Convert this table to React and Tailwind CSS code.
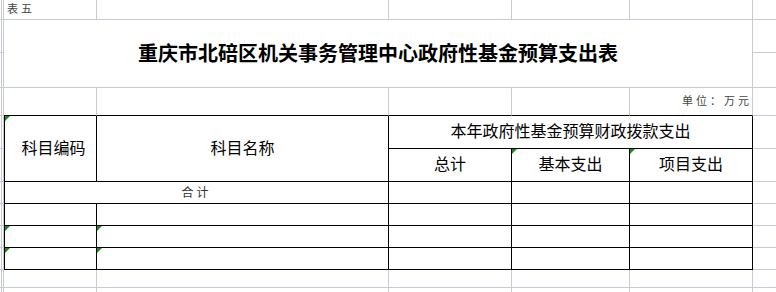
import React from 'react';

// sheet gridline / table border styles
const grid = 'relative box-border border-r border-b border-[#c7cbd8]';
const gridTop = 'relative box-border border-r border-b border-r-[#c7cbd8] border-b-black';
const cell = 'relative box-border border-r border-b border-black';
const cellLeft = 'relative box-border border-l border-r border-b border-black';

// green "number stored as text" marker
const Flag = () => (
  <svg className="absolute left-0 top-0" width="5" height="5" viewBox="0 0 5 5">
    <path d="M0 0H5L0 5Z" fill="#1b8a1b" />
  </svg>
);

const Edge = () => (
  <>
    <div className={grid} />
    <div className={grid} />
  </>
);

const DataRow = ({ flagged }) => (
  <>
    <Edge />
    <div className={cellLeft}>{flagged && <Flag />}</div>
    <div className={cell}>{flagged && <Flag />}</div>
    <div className={cell} />
    <div className={cell} />
    <div className={cell} />
    <div className={grid} />
  </>
);

const BlankRow = () => (
  <>
    <Edge />
    <div className={grid} />
    <div className={grid} />
    <div className={grid} />
    <div className={grid} />
    <div className={grid} />
    <div className={grid} />
  </>
);

export default function App() {
  return (
    <div className="w-[776px] h-[292px] overflow-hidden bg-white font-['Liberation_Sans','Noto_Sans_CJK_SC',sans-serif] text-black">
      <div className="grid grid-cols-[2px_2px_93px_292px_123px_118px_123px_120px] grid-rows-[20px_33px_35px_28px_33px_33px_22px_22px_22px_22px_18px_30px]">
        {/* row 1 */}
        <Edge />
        <div className={`${grid} flex items-center pl-[3px] text-[11px] tracking-[3px] text-[#444]`}>表五</div>
        <div className={grid} />
        <div className={grid} />
        <div className={grid} />
        <div className={grid} />
        <div className={grid} />

        {/* rows 2-3: title */}
        <Edge />
        <div className={`${grid} col-span-5 row-span-2 flex items-center justify-center text-[20px] font-bold`}>
          重庆市北碚区机关事务管理中心政府性基金预算支出表
        </div>
        <div className={grid} />
        <Edge />
        <div className={grid} />

        {/* row 4: unit */}
        <Edge />
        <div className={gridTop} />
        <div className={gridTop} />
        <div className={gridTop} />
        <div className={gridTop} />
        <div className={`${gridTop} flex items-center justify-end pr-0 text-[11px] tracking-[3px] text-[#444]`}>
          单位：万元
        </div>
        <div className={grid} />

        {/* rows 5-6: header */}
        <Edge />
        <div className={`${cellLeft} row-span-2 flex items-center justify-center pl-[6px] text-[16px]`}>
          <Flag />
          科目编码
        </div>
        <div className={`${cell} row-span-2 flex items-center justify-center text-[16px]`}>科目名称</div>
        <div className={`${cell} col-span-3 flex items-center justify-center text-[16px]`}>
          本年政府性基金预算财政拨款支出
        </div>
        <div className={grid} />
        <Edge />
        <div className={`${cell} flex items-center justify-center text-[16px]`}>总计</div>
        <div className={`${cell} flex items-center justify-center text-[16px]`}>
          <Flag />
          基本支出
        </div>
        <div className={`${cell} flex items-center justify-center text-[16px]`}>
          <Flag />
          项目支出
        </div>
        <div className={grid} />

        {/* row 7: total */}
        <Edge />
        <div className={`${cellLeft} col-span-2 flex items-center justify-center text-[12px] tracking-[3px] text-[#333]`}>
          合计
        </div>
        <div className={cell} />
        <div className={cell} />
        <div className={cell} />
        <div className={grid} />

        <DataRow />
        <DataRow flagged />
        <DataRow flagged />
        <BlankRow />
        <BlankRow />
      </div>
    </div>
  );
}
